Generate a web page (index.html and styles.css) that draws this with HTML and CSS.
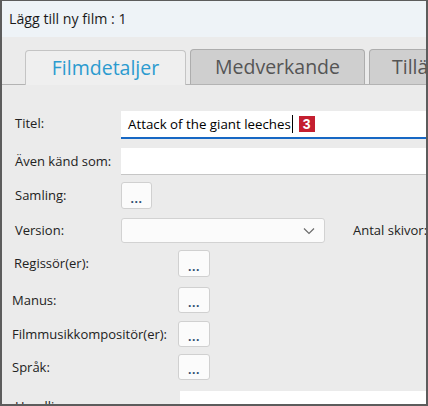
FILE: index.html
```html
<!DOCTYPE html>
<html lang="sv">
<head>
<meta charset="utf-8">
<title>Lägg till ny film</title>
<link rel="stylesheet" href="styles.css">
</head>
<body>
<div class="window">
  <div class="titlebar">Lägg till ny film : 1</div>
  <div class="content">
    <div class="tabs">
      <div class="tab-lead"></div>
      <div class="tab active">Filmdetaljer</div>
      <div class="tab second">Medverkande</div>
      <div class="tab third">Tillägg</div>
    </div>
    <div class="form">
      <div class="row r1">
        <div class="label la">Titel:</div>
        <div class="textbox focused">
          <span class="value">Attack of the giant leeches</span><span class="caret"></span><span class="badge">3</span>
        </div>
      </div>
      <div class="row r2">
        <div class="label la">Även känd som:</div>
        <div class="textbox plain"></div>
      </div>
      <div class="row r3">
        <div class="label la">Samling:</div>
        <div class="btn">...</div>
      </div>
      <div class="row r4">
        <div class="label la">Version:</div>
        <div class="select">
          <svg class="chev" width="12" height="8" viewBox="0 0 12 8"><path d="M1 1.5 L6 6.5 L11 1.5" fill="none" stroke="#6b6b6b" stroke-width="1.2"/></svg>
        </div>
        <div class="extra">Antal skivor:</div>
      </div>
      <div class="row r5">
        <div class="label lb lb-reg">Regissör(er):</div>
        <div class="btn wide">...</div>
      </div>
      <div class="row r6">
        <div class="label lb">Manus:</div>
        <div class="btn wide">...</div>
      </div>
      <div class="row r7">
        <div class="label lb">Filmmusikkompositör(er):</div>
        <div class="btn wide">...</div>
      </div>
      <div class="row r8">
        <div class="label lb">Språk:</div>
        <div class="btn wide">...</div>
      </div>
      <div class="row r9">
        <div class="label lb lb-hand">Handling:</div>
        <div class="area"></div>
      </div>
    </div>
  </div>
</div>
</body>
</html>
```

FILE: styles.css
```css
* { box-sizing: border-box; }
html, body { margin: 0; padding: 0; }
body {
  width: 428px;
  height: 406px;
  overflow: hidden;
  font-family: "Segoe UI", "Open Sans", "Noto Sans", sans-serif;
  color: #1e1e1e;
  background: #ebebeb;
}
.window {
  width: 428px;
  height: 406px;
  border-style: solid;
  border-color: #5c5c5c;
  border-width: 1px 2px 2px 2px;
  overflow: hidden;
  display: flex;
  flex-direction: column;
  background: #ebebeb;
}
.titlebar {
  height: 36px;
  line-height: 36px;
  padding-left: 7px;
  font-size: 14.2px;
  color: #1a1a1a;
  background: #eef3f7;
  flex: none;
}
.content {
  flex: 1;
  background: #ebebeb;
  overflow: hidden;
}
.tabs {
  margin-top: 13px;
  height: 35px;
  display: flex;
  align-items: flex-end;
  gap: 4px;
  border-bottom: 1px solid #b3b3b3;
  white-space: nowrap;
}
.tab-lead { width: 19px; flex: none; }
.tab {
  flex: none;
  height: 35px;
  line-height: 33px;
  font-size: 19.5px;
  text-align: center;
  border: 1px solid #adadad;
  border-bottom: none;
  border-radius: 4px 4px 0 0;
  color: #555;
  background: #cfcfcf;
}
.tab.active {
  width: 161px;
  height: 35px;
  margin-bottom: -1px;
  background: #efefef;
  color: #2b9bcf;
  border-color: #c4c4c4;
}
.tab.second { width: 175px; }
.tab.third { width: 150px; text-align: left; padding-left: 22px; }

.form {
  margin-top: 26px;
  display: grid;
  grid-template-rows: 37px 34px 36px 32px 37px 34px 33px 37px auto;
}
.row {
  display: flex;
  align-items: flex-start;
  white-space: nowrap;
}
.label {
  flex: none;
  font-size: 13px;
  color: #222;
}
.la { width: 119px; padding-left: 13px; }
.lb { width: 176px; padding-left: 10px; }
.lb-reg { padding-left: 12px; }
.lb-hand { padding-left: 13px; }

.r1 .label { line-height: 25px; }
.r2 .label { line-height: 26px; }
.r3 .label { line-height: 27px; }
.r4 .label { line-height: 25px; }
.r5 .label { line-height: 27px; }
.r6 .label, .r7 .label, .r8 .label { line-height: 26px; }
.r9 .label { line-height: 26px; padding-top: 2px; }

.textbox {
  flex: 1;
  background: #fff;
  display: flex;
  align-items: center;
  padding-left: 7px;
  font-size: 13.3px;
  color: #000;
}
.textbox.focused {
  height: 28px;
  border-bottom: 2px solid #1768c4;
}
.textbox.plain {
  height: 27px;
  border-bottom: 1px solid #c6c6c6;
}
.caret {
  display: inline-block;
  width: 1px;
  height: 18px;
  background: #000;
  margin-left: 1px;
}
.badge {
  display: inline-block;
  width: 16px;
  height: 16px;
  margin-left: 6px;
  background: #c41f30;
  color: #fff;
  font-weight: 700;
  font-size: 14px;
  line-height: 16px;
  text-align: center;
  font-family: "Liberation Sans", "Open Sans", sans-serif;
}
.btn {
  flex: none;
  width: 31px;
  height: 27px;
  background: #fbfbfb;
  border: 1px solid #d0d0d0;
  border-radius: 3px;
  font-size: 12px;
  line-height: 25px;
  padding-top: 3px;
  text-align: center;
  color: #2c4a6e;
  font-weight: 700;
  letter-spacing: 0.5px;
}
.btn.wide { width: 32px; }
.r6 .btn, .r7 .btn, .r8 .btn { height: 26px; line-height: 24px; }
.select {
  flex: none;
  width: 204px;
  height: 25px;
  background: #fbfbfb;
  border: 1px solid #d2d2d2;
  border-radius: 3px;
  display: flex;
  align-items: center;
  justify-content: flex-end;
  padding-right: 9px;
}
.extra {
  margin-left: 28px;
  font-size: 13px;
  line-height: 25px;
  color: #222;
}
.area {
  flex: 1;
  margin-left: 2px;
  height: 40px;
  background: #fff;
}
```
